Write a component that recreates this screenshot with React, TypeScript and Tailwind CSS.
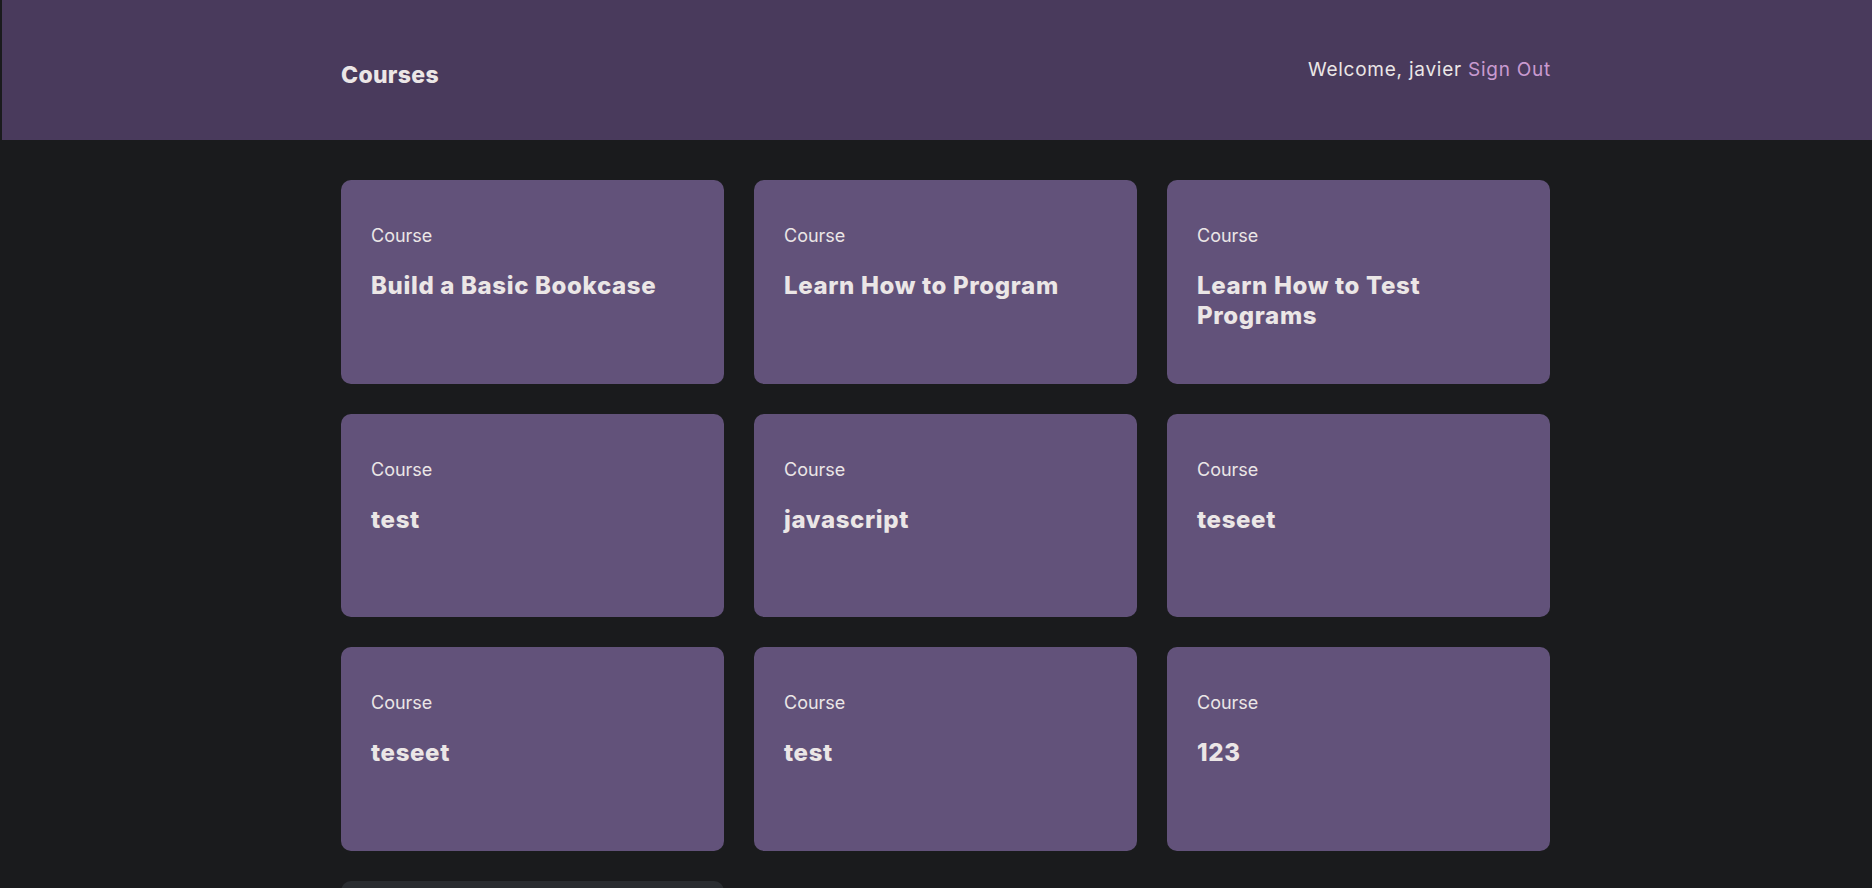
import React from "react";

const courses = [
  "Build a Basic Bookcase",
  "Learn How to Program",
  "Learn How to Test Programs",
  "test",
  "javascript",
  "teseet",
  "teseet",
  "test",
  "123",
];

export default function App() {
  return (
    <div
      className="min-h-screen bg-[#1a1b1d] text-[#ebe6e6]"
      style={{ fontFamily: "Inter, 'Noto Sans', sans-serif" }}
    >
      <header className="ml-[2px] h-[140px] bg-[#493a5c]">
        <div className="ml-[339px] flex w-[1210px] items-start justify-between">
          <h1 className="mt-[61px] text-[23px] font-extrabold leading-[28px] tracking-[0.3px]">Courses</h1>
          <div className="mt-[58px] text-[19px] leading-[24px] tracking-[0.75px]">
            Welcome, javier <a className="text-[#c99ad0]">Sign Out</a>
          </div>
        </div>
      </header>
      <main className="ml-[341px] grid w-[1209px] grid-cols-3 gap-[30px] pt-[40px]">
        {courses.map((c, i) => (
          <div key={i} className="h-[203.6px] rounded-[10px] bg-[#62527a] px-[30px] pt-[44px]">
            <div className="text-[18px] leading-[24px]">Course</div>
            <div className="mt-[23px] text-[24px] font-extrabold leading-[30px] tracking-[0.65px]">{c}</div>
          </div>
        ))}
        <div className="h-[203.6px] rounded-[10px] bg-[#2a2d31]" />
      </main>
    </div>
  );
}
